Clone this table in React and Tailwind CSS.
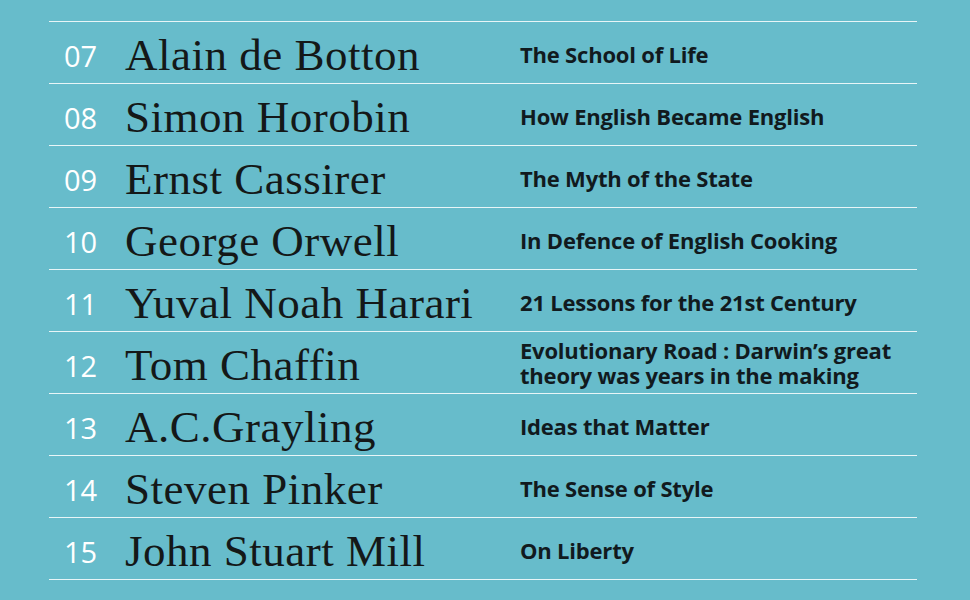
const rows = [
  ["07", "Alain de Botton", "The School of Life"],
  ["08", "Simon Horobin", "How English Became English"],
  ["09", "Ernst Cassirer", "The Myth of the State"],
  ["10", "George Orwell", "In Defence of English Cooking"],
  ["11", "Yuval Noah Harari", "21 Lessons for the 21st Century"],
  ["12", "Tom Chaffin", "Evolutionary Road : Darwin\u2019s great theory was years in the making"],
  ["13", "A.C.Grayling", "Ideas that Matter"],
  ["14", "Steven Pinker", "The Sense of Style"],
  ["15", "John Stuart Mill", "On Liberty"],
];

export default function App() {
  return (
    <div className="w-[970px] h-[600px] bg-[#67bccb] pt-[21px] pl-[49px] overflow-hidden">
      <div className="w-[868px] border-t border-white/85">
        {rows.map(([n, name, book]) => (
          <div key={n} className="h-[62px] border-b border-white/85 flex items-center">
            <div className="w-[76px] pl-[15px] text-[29px] text-white font-['Open_Sans',sans-serif] leading-none pt-[5px]">{n}</div>
            <div className="w-[395px] text-[45px] text-[#141818] font-['Liberation_Serif',serif] leading-none tracking-[0.5px] pt-[6px]">{name}</div>
            <div className={book.length > 40 ? "w-[380px] text-[22px] font-bold text-[#111a1e] font-['Open_Sans',sans-serif] leading-[25px] tracking-[-0.2px] pt-[1px]" : "w-[380px] text-[22px] font-bold text-[#111a1e] font-['Open_Sans',sans-serif] leading-[25px] tracking-[-0.2px] pt-[4px]"}>{book}</div>
          </div>
        ))}
      </div>
    </div>
  );
}
